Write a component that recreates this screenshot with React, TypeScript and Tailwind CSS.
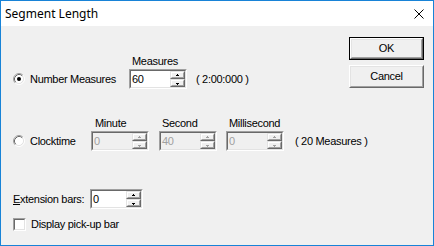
const ui = "font-['Liberation_Sans',Arial,sans-serif] text-[11px] tracking-[-0.3px] text-black";

const Arrow = ({ up, disabled }: { up: boolean; disabled?: boolean }) => (
  <svg width="5" height="3" viewBox="0 0 5 3" shapeRendering="crispEdges">
    <g fill={disabled ? "#a0a0a0" : "#000"}>
      {up ? (
        <>
          <rect x="2" y="0" width="1" height="1" />
          <rect x="1" y="1" width="3" height="1" />
        </>
      ) : (
        <>
          <rect x="1" y="1" width="3" height="1" />
          <rect x="2" y="2" width="1" height="1" />
        </>
      )}
    </g>
  </svg>
);

const SpinBtn = ({ up, disabled }: { up: boolean; disabled?: boolean }) => (
  <div className="h-[8px] border border-t-[#e3e3e3] border-l-[#e3e3e3] border-r-[#696969] border-b-[#696969] bg-[#f0f0f0]">
    <div className="h-full border border-t-white border-l-white border-r-[#a0a0a0] border-b-[#a0a0a0] flex items-center justify-center">
      <Arrow up={up} disabled={disabled} />
    </div>
  </div>
);

const Spin = ({
  value,
  width,
  disabled,
}: {
  value: string;
  width: string;
  disabled?: boolean;
}) => (
  <div
    className={`${width} shrink-0 h-[20px] border border-t-[#a0a0a0] border-l-[#a0a0a0] border-r-white border-b-white`}
  >
    <div
      className={`h-full flex border border-t-[#696969] border-l-[#696969] border-r-[#e3e3e3] border-b-[#e3e3e3] ${
        disabled ? "bg-[#f0f0f0]" : "bg-white"
      }`}
    >
      <div
        className={`flex-1 pl-[1px] leading-[16px] ${
          disabled ? "text-[#a0a0a0]" : "text-black"
        }`}
      >
        {value}
      </div>
      <div className="w-[15px] flex flex-col">
        <SpinBtn up disabled={disabled} />
        <SpinBtn up={false} disabled={disabled} />
      </div>
    </div>
  </div>
);

const Radio = ({ checked }: { checked?: boolean }) => (
  <svg width="12" height="12" viewBox="0 0 12 12" className="shrink-0">
    <circle cx="6" cy="6" r="4.5" fill="#fff" />
    <path d="M2.11 9.89 A5.5 5.5 0 0 1 9.89 2.11" stroke="#a0a0a0" fill="none" />
    <path d="M9.89 2.11 A5.5 5.5 0 0 1 2.11 9.89" stroke="#fff" fill="none" />
    <path d="M2.82 9.18 A4.5 4.5 0 0 1 9.18 2.82" stroke="#696969" fill="none" />
    <path d="M9.18 2.82 A4.5 4.5 0 0 1 2.82 9.18" stroke="#e3e3e3" fill="none" />
    {checked && <circle cx="6" cy="6" r="2" fill="#000" />}
  </svg>
);

const Check = () => (
  <div className="w-[13px] h-[13px] shrink-0 border border-t-[#a0a0a0] border-l-[#a0a0a0] border-r-white border-b-white">
    <div className="h-full border border-t-[#696969] border-l-[#696969] border-r-[#e3e3e3] border-b-[#e3e3e3] bg-white" />
  </div>
);

const Button = ({ label, isDefault }: { label: string; isDefault?: boolean }) => (
  <div
    className={`w-[75px] h-[23px] border ${
      isDefault ? "border-black" : "border-t-white border-l-white border-r-[#696969] border-b-[#696969]"
    }`}
  >
    <div
      className={`h-full border ${
        isDefault
          ? "border-t-white border-l-white border-r-[#696969] border-b-[#696969]"
          : "border-t-[#e3e3e3] border-l-[#e3e3e3] border-r-[#a0a0a0] border-b-[#a0a0a0]"
      }`}
    >
      <div
        className={`h-full flex items-center justify-center bg-[#f0f0f0] ${
          isDefault ? "border border-t-[#e3e3e3] border-l-[#e3e3e3] border-r-[#a0a0a0] border-b-[#a0a0a0]" : ""
        }`}
      >
        {label}
      </div>
    </div>
  </div>
);

const Field = ({
  label,
  value,
  width,
  disabled,
  gap,
}: {
  label: string;
  value: string;
  width: string;
  disabled?: boolean;
  gap: string;
}) => (
  <div className="flex flex-col shrink-0">
    <div className={`${gap} h-[13px] leading-[13px] mb-[1px] whitespace-nowrap`}>{label}</div>
    <Spin value={value} width={width} disabled={disabled} />
  </div>
);

export default function App() {
  return (
    <div className={`w-[434px] h-[246px] border border-[#1883d7] flex flex-col bg-white ${ui}`}>
      <div className="h-[25px] flex items-center justify-between pl-[4px] pr-[9px] bg-white">
        <span className="font-['Noto_Sans',sans-serif] text-[12px] tracking-normal">Segment Length</span>
        <svg width="10" height="10" viewBox="0 0 10 10">
          <path d="M0.5 0.5 L9.5 9.5 M9.5 0.5 L0.5 9.5" stroke="#000" strokeWidth="1" />
        </svg>
      </div>
      <div className="flex-1 flex bg-[#f0f0f0]">
        <div className="flex-1 min-w-0 flex flex-col pl-[12px] pt-[29px]">
          <div className="flex items-end">
            <div className="w-[116px] shrink-0 h-[20px] flex items-center gap-[5px] whitespace-nowrap">
              <Radio checked />
              <span>Number Measures</span>
            </div>
            <Field label="Measures" value="60" width="w-[58px]" gap="ml-[3px]" />
            <div className="h-[20px] flex items-center ml-[9px] whitespace-nowrap">( 2:00:000 )</div>
          </div>
          <div className="flex items-end mt-[28px]">
            <div className="w-[78px] shrink-0 h-[20px] flex items-center gap-[5px] whitespace-nowrap">
              <Radio />
              <span>Clocktime</span>
            </div>
            <Field label="Minute" value="0" width="w-[58px]" gap="ml-[4px]" disabled />
            <div className="ml-[10px] shrink-0">
              <Field label="Second" value="40" width="w-[58px]" gap="ml-[3px]" disabled />
            </div>
            <div className="ml-[9px] shrink-0">
              <Field label="Millisecond" value="0" width="w-[58px]" gap="ml-[3px]" disabled />
            </div>
            <div className="h-[20px] flex items-center ml-[11px] whitespace-nowrap">( 20 Measures )</div>
          </div>
          <div className="flex items-center mt-[38px]">
            <div className="w-[77px] shrink-0 whitespace-nowrap">
              <span className="underline underline-offset-[1px]">E</span>xtension bars:
            </div>
            <Spin value="0" width="w-[53px]" />
          </div>
          <div className="flex items-center gap-[5px] mt-[7px]">
            <Check />
            <span>Display pick-up bar</span>
          </div>
        </div>
        <div className="flex flex-col gap-[5px] pt-[11px] pr-[9px] shrink-0">
          <Button label="OK" isDefault />
          <Button label="Cancel" />
        </div>
      </div>
    </div>
  );
}
